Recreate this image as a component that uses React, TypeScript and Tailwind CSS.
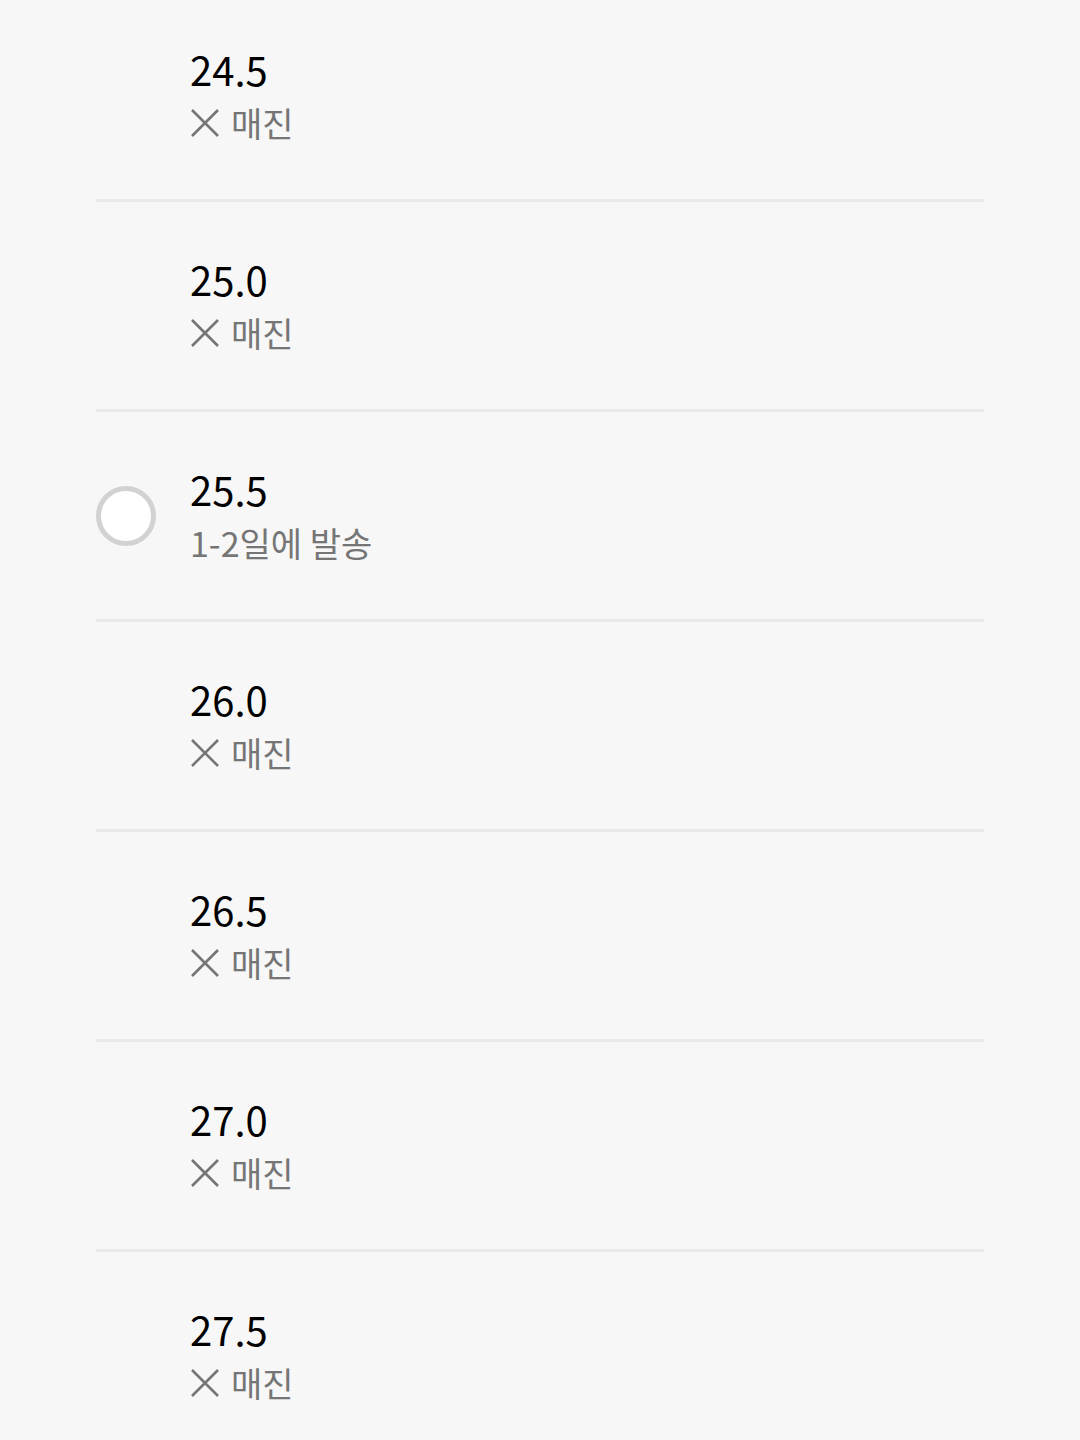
import React from "react";

type Size = {
  label: string,
  soldOut: boolean,
  note?: string
}

const sizes: Size[] = [
  { label: "24.5", soldOut: true },
  { label: "25.0", soldOut: true },
  { label: "25.5", soldOut: false, note: "1-2일에 발송" },
  { label: "26.0", soldOut: true },
  { label: "26.5", soldOut: true },
  { label: "27.0", soldOut: true },
  { label: "27.5", soldOut: true },
];

const CrossIcon = () => (
  <svg width="30" height="30" viewBox="0 0 30 30" className="shrink-0">
    <path d="M2 2 L28 28 M28 2 L2 28" stroke="#757575" strokeWidth="2.6" strokeLinecap="butt" fill="none" />
  </svg>
);

const SizeRow = ({ size }: { size: Size }) => (
  <div className="flex items-center h-[210px] border-b-[3px] border-[#e9e9e9]">
    <div className="w-[94px] shrink-0 flex items-center">
      {!size.soldOut && (
        <div className="w-[60px] h-[60px] rounded-full border-[5px] border-[#d2d2d2] bg-white" />
      )}
    </div>
    <div className="flex flex-col">
      <span className="text-[40px] leading-[52px] text-black">{size.label}</span>
      {size.soldOut ? (
        <span className="mt-[2px] flex items-center gap-[11px] text-[34px] leading-[52px] text-[#757575]">
          <CrossIcon />
          매진
        </span>
      ) : (
        <span className="mt-[2px] text-[34px] leading-[52px] text-[#757575]">{size.note}</span>
      )}
    </div>
  </div>
);

export default function App() {
  return (
    <div
      className="min-h-[1440px] bg-[#f7f7f7] overflow-hidden"
      style={{ fontFamily: '"Noto Sans CJK KR", "Noto Sans", sans-serif' }}
    >
      <div className="mx-[96px] -mt-[8px]">
        {sizes.map((s) => (
          <SizeRow key={s.label} size={s} />
        ))}
      </div>
    </div>
  );
}
